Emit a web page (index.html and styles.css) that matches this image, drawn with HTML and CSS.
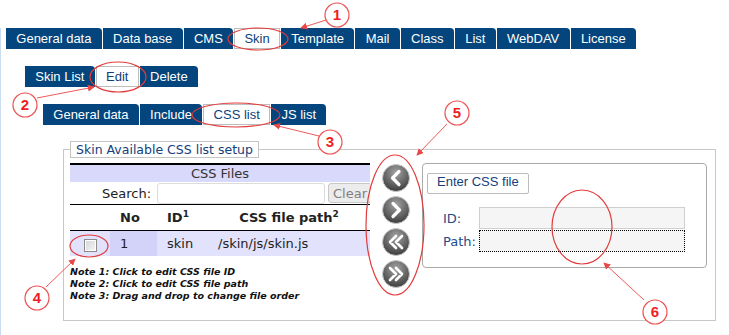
FILE: index.html
```html
<!DOCTYPE html>
<html>
<head>
<meta charset="utf-8">
<title>Skin - CSS list</title>
<link rel="stylesheet" href="styles.css">
</head>
<body>
<svg class="defs" width="0" height="0">
	<defs>
		<radialGradient id="btnFill" cx="50%" cy="30%" r="70%">
			<stop offset="0" stop-color="#a3a3a3"/>
			<stop offset="0.55" stop-color="#6b6b6b"/>
			<stop offset="1" stop-color="#3d3d3d"/>
		</radialGradient>
		<marker id="tip" viewBox="0 0 8 8" refX="7" refY="4" markerWidth="7" markerHeight="7" orient="auto">
			<path d="M0 0 L8 4 L0 8 Z" fill="#e84848"/>
		</marker>
	</defs>
</svg>

<div class="page">
	<div class="tabs topTabs">
		<a href="#">General data</a>
		<a href="#">Data base</a>
		<a href="#">CMS</a>
		<a href="#" class="on">Skin</a>
		<a href="#">Template</a>
		<a href="#">Mail</a>
		<a href="#">Class</a>
		<a href="#">List</a>
		<a href="#">WebDAV</a>
		<a href="#">License</a>
	</div>
	<div class="tabs skinTabs">
		<a href="#">Skin List</a>
		<a href="#" class="on">Edit</a>
		<a href="#">Delete</a>
	</div>
	<div class="tabs cssTabs">
		<a href="#">General data</a>
		<a href="#">Include</a>
		<a href="#" class="on">CSS list</a>
		<a href="#">JS list</a>
	</div>

	<fieldset class="setup">
		<legend>Skin Available CSS list setup</legend>
		<div class="setupBody">
			<div class="listCol">
				<div class="listWrap">
					<table class="cssTable">
						<colgroup>
							<col class="wCheck">
							<col class="wNo">
							<col class="wId">
							<col class="wPath">
						</colgroup>
						<tr class="titleRow"><td colspan="4">CSS Files</td></tr>
						<tr class="searchRow">
							<td colspan="4">
								<div class="searchBox">
									<span class="searchLabel">Search:</span>
									<input type="text" class="searchInput">
									<button class="clearBtn">Clear</button>
								</div>
							</td>
						</tr>
						<tr class="headRow">
							<th></th>
							<th class="padL">No</th>
							<th class="padL">ID<sup>1</sup></th>
							<th class="cPath">CSS file path<sup>2</sup></th>
						</tr>
						<tr class="dataRow">
							<td class="cCheck"><input type="checkbox" class="chk"></td>
							<td class="padL cNo">1</td>
							<td class="padL">skin</td>
							<td class="padL">/skin/js/skin.js</td>
						</tr>
					</table>
				</div>
				<div class="notes">
					Note 1: Click to edit CSS file ID<br>
					Note 2: Click to edit CSS file path<br>
					Note 3: Drag and drop to change file order
				</div>
			</div>

			<div class="moveCol">
				<svg class="moveBtn" viewBox="0 0 28 28"><circle cx="14" cy="14" r="13.5" fill="url(#btnFill)" stroke="#c9c9c9"/><path d="M17 7.5 L10.5 14 L17 20.5" /></svg>
				<svg class="moveBtn" viewBox="0 0 28 28"><circle cx="14" cy="14" r="13.5" fill="url(#btnFill)" stroke="#c9c9c9"/><path d="M11 7.5 L17.5 14 L11 20.5" /></svg>
				<svg class="moveBtn" viewBox="0 0 28 28"><circle cx="14" cy="14" r="13.5" fill="url(#btnFill)" stroke="#c9c9c9"/><path class="thin" d="M14 8 L8 14 L14 20 M20 8 L14 14 L20 20" /></svg>
				<svg class="moveBtn" viewBox="0 0 28 28"><circle cx="14" cy="14" r="13.5" fill="url(#btnFill)" stroke="#c9c9c9"/><path class="thin" d="M8 8 L14 14 L8 20 M14 8 L20 14 L14 20" /></svg>
			</div>

			<div class="entryPanel">
				<span class="enterBtn">Enter CSS file</span>
				<div class="entryForm">
					<label>ID:</label>
					<input type="text" class="entryInput">
					<label>Path:</label>
					<input type="text" class="entryInput focused">
				</div>
			</div>
		</div>
	</fieldset>
</div>

<svg class="marks" width="729" height="335" viewBox="0 0 729 335">
	<g class="ring">
		<ellipse cx="258" cy="39" rx="30" ry="11"/>
		<ellipse cx="118" cy="77" rx="28" ry="15"/>
		<ellipse cx="236" cy="115" rx="44" ry="12"/>
		<ellipse cx="89" cy="246" rx="19" ry="11"/>
		<ellipse cx="395" cy="225" rx="29" ry="70"/>
		<ellipse cx="582" cy="227" rx="30" ry="37"/>
	</g>
	<g class="pointer">
		<line x1="326" y1="20" x2="301" y2="28"/>
		<line x1="37" y1="98" x2="94" y2="87"/>
		<line x1="319" y1="136" x2="274" y2="125"/>
		<line x1="46" y1="287" x2="75" y2="259"/>
		<line x1="447" y1="124" x2="417" y2="155"/>
		<line x1="644" y1="300" x2="604" y2="263"/>
	</g>
	<g class="badge">
		<circle cx="337" cy="15" r="12"/>
		<circle cx="25" cy="105" r="12"/>
		<circle cx="330" cy="142" r="12"/>
		<circle cx="37" cy="298" r="12"/>
		<circle cx="457" cy="113" r="12"/>
		<circle cx="655" cy="312" r="12"/>
	</g>
	<g class="badgeText">
		<text x="337" y="20">1</text>
		<text x="25" y="110">2</text>
		<text x="330" y="147">3</text>
		<text x="37" y="303">4</text>
		<text x="457" y="118">5</text>
		<text x="655" y="317">6</text>
	</g>
</svg>
</body>
</html>
```

FILE: styles.css
```css
body{
	margin:0;
	width:729px;
	height:335px;
	overflow:hidden;
	position:relative;
	font-family:"DejaVu Sans", Verdana, sans-serif;
	background:#fff;
}
.defs{
	position:absolute;
}
.page{
	margin-top:28px;
	border-left:1px solid #c9dcf1;
	height:307px;
}

/* tabs */
.tabs{
	display:flex;
	height:21px;
}
.tabs a{
	display:block;
	padding:0 10.3px;
	margin-right:1px;
	background:#03457c;
	color:#fff;
	font:13px/21px "Liberation Sans", Arial, sans-serif;
	text-decoration:none;
	border-radius:0 4px 0 0;
}
.tabs a.on{
	background:#fff;
	color:#0d3f7c;
	box-shadow:inset 0 0 0 1px #bdbdbd;
	border-radius:0;
}
.topTabs{
	padding-left:5px;
}
.skinTabs{
	margin:17px 0 0 24px;
}
.cssTabs{
	margin:17px 0 0 42px;
}

/* setup box */
.setup{
	box-sizing:border-box;
	width:653px;
	margin:16px 0 0 62px;
	padding:5px 6px 18px 6px;
	border:1px solid #c8c8c8;
}
.setup legend{
	padding:0 5px;
	border:1px solid #c4c4c4;
	font-size:12.5px;
	line-height:15px;
	color:#14407c;
}
.setupBody{
	display:flex;
	gap:12px;
	align-items:flex-start;
}
.listCol{
	width:300px;
}
.listWrap{
	width:300px;
	overflow:hidden;
}
.cssTable{
	width:300px;
	border-collapse:collapse;
	table-layout:fixed;
	font-size:13px;
	color:#222;
}
.wCheck{ width:40px; }
.wNo{ width:47px; }
.wId{ width:51px; }
.wPath{ width:162px; }
.cssTable td, .cssTable th{
	padding:0;
	white-space:nowrap;
}
.cssTable .padL{
	padding-left:10px;
}
.titleRow td{
	height:17px;
	border-top:2px solid #000;
	background:#d9d9fc;
	text-align:center;
	line-height:17px;
	color:#333;
}
.searchRow td{
	height:22px;
	border-bottom:1px solid #000;
}
.searchBox{
	display:flex;
	align-items:center;
	padding-left:32px;
	white-space:nowrap;
}
.searchLabel{
	width:50px;
}
.searchInput{
	box-sizing:border-box;
	width:168px;
	height:21px;
	margin:0 3px 0 6px;
	border:1px solid #dcdcdc;
	border-radius:3px;
	background:#fff;
}
.clearBtn{
	height:20px;
	padding:0 4px;
	border:1px solid #c8c8c8;
	border-radius:3px;
	background:#ececec;
	color:#808080;
	font:13px "DejaVu Sans", Verdana, sans-serif;
}
.headRow th{
	height:25px;
	border-bottom:1px solid #000;
	font-weight:bold;
	text-align:left;
}
.headRow sup{
	font-size:9px;
	line-height:0;
}
.headRow .cPath{
	text-align:center;
}
.dataRow td{
	height:25px;
	background:#e2e2fc;
}
.dataRow td.cNo{
	background:#d3d3fa;
}
.dataRow .cCheck{
	text-align:center;
}
.chk{
	appearance:none;
	-webkit-appearance:none;
	width:13px;
	height:13px;
	margin:3px 0 0 0;
	vertical-align:middle;
	border:1px solid #8b8b8b;
	background:linear-gradient(135deg, #d4d4d4, #f7f7f7);
	box-shadow:inset 0 0 0 1px #fff;
}
.notes{
	margin-top:10px;
	font-size:9.5px;
	line-height:12px;
	font-weight:bold;
	font-style:italic;
	color:#111;
	white-space:nowrap;
}

/* move buttons */
.moveCol{
	display:flex;
	flex-direction:column;
	gap:4px;
	padding-top:1px;
}
.moveBtn{
	width:28px;
	height:28px;
	display:block;
}
.moveBtn path{
	fill:none;
	stroke:#fff;
	stroke-width:3.2;
	stroke-linecap:round;
	stroke-linejoin:round;
}
.moveBtn path.thin{
	stroke-width:2.6;
}

/* entry panel */
.entryPanel{
	box-sizing:border-box;
	width:285px;
	height:105px;
	padding:7px 4px;
	border:1px solid #aaa;
	border-radius:4px;
}
.enterBtn{
	display:inline-block;
	padding:0 9px;
	height:19px;
	line-height:19px;
	border:1px solid #bcbcbc;
	border-radius:2px;
	color:#14407c;
	font:13px "Liberation Sans", Arial, sans-serif;
}
.entryForm{
	display:grid;
	grid-template-columns:36px 206px;
	row-gap:1px;
	align-items:center;
	margin:13px 0 0 16px;
	font-size:13px;
	color:#1f4b88;
}
.entryInput{
	box-sizing:border-box;
	width:206px;
	height:22px;
	border:1px solid #cfcfcf;
	background:#f5f5f5;
}
.entryInput.focused{
	border:1px dotted #000;
}

/* annotations */
.marks{
	position:absolute;
	left:0;
	top:0;
	pointer-events:none;
}
.ring ellipse{
	fill:none;
	stroke:#e23b3b;
	stroke-width:1.2;
}
.pointer line{
	stroke:#ec5a5a;
	stroke-width:1;
	marker-end:url(#tip);
}
.badge circle{
	fill:#fff;
	stroke:#ec5050;
	stroke-width:1.2;
}
.badgeText text{
	fill:#f01e1e;
	font:bold 15px "Liberation Sans", Arial, sans-serif;
	text-anchor:middle;
}
```
